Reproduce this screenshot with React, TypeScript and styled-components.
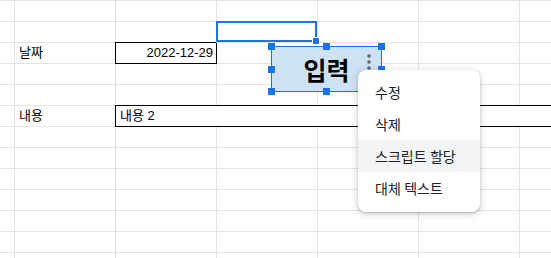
import React from 'react';
import styled, { createGlobalStyle } from 'styled-components';

const GRID = '#e2e2e2';
const BLUE = '#1a73e8';

const Global = createGlobalStyle`
  html, body { margin: 0; padding: 0; background: #fff; overflow: hidden; }
  body { font-family: "Liberation Sans", "Noto Sans CJK KR", Arial, sans-serif; }
`;

const Page = styled.div`
  position: relative;
  width: 551px;
  height: 258px;
  overflow: hidden;
`;

const Grid = styled.div`
  width: 600px;
  box-sizing: border-box;
  border-top: 1px solid ${GRID};
  display: grid;
  grid-template-columns: 15px repeat(5, 101px) 80px;
  grid-auto-rows: 21px;
`;

const Cell = styled.div<{ $align?: 'left' | 'right'; $boxed?: boolean; $wide?: boolean }>`
  position: relative;
  box-sizing: border-box;
  border-right: 1px solid ${(p) => (p.$boxed ? '#000' : GRID)};
  border-bottom: 1px solid ${(p) => (p.$boxed ? '#000' : GRID)};
  ${(p) => (p.$boxed ? 'box-shadow: -1px -1px 0 0 #000, -1px 0 0 0 #000;' : '')}
  grid-column: ${(p) => (p.$wide ? '3 / -1' : 'auto')};
  padding: 0 3px 0 4px;
  font-size: 13px;
  line-height: 20px;
  color: #000;
  text-align: ${(p) => p.$align ?? 'left'};
  white-space: nowrap;
`;

const Selection = styled.div`
  position: absolute;
  top: -1px;
  left: -1px;
  right: 0;
  bottom: 0;
  border: 2px solid ${BLUE};
  pointer-events: none;
  z-index: 2;
`;

const FillHandle = styled.div`
  position: absolute;
  right: -4px;
  bottom: -4px;
  width: 6px;
  height: 6px;
  background: ${BLUE};
  box-shadow: 0 0 0 1px #fff;
`;

const Drawing = styled.div`
  position: absolute;
  left: 271px;
  top: 46px;
  width: 111px;
  height: 46px;
  box-sizing: border-box;
  padding: 7px 10px;
  background: #cfe2f3;
  border: 1px solid ${BLUE};
  display: grid;
  grid-template-columns: 1fr auto 1fr;
  align-items: center;
  font-family: "Noto Sans CJK KR", sans-serif;
  font-weight: 700;
  font-size: 25px;
  color: #000;
  z-index: 3;
`;

const Label = styled.span`
  grid-column: 2;
  line-height: 1;
`;

const Kebab = styled.svg`
  grid-column: 3;
  justify-self: end;
  align-self: start;
  display: block;
`;

const Handle = styled.div<{ $x: 'start' | 'mid' | 'end'; $y: 'start' | 'mid' | 'end' }>`
  position: absolute;
  width: 7px;
  height: 7px;
  background: ${BLUE};
  ${(p) =>
    p.$x === 'start' ? 'left: -4px;' : p.$x === 'end' ? 'right: -4px;' : 'left: calc(50% - 3.5px);'}
  ${(p) =>
    p.$y === 'start' ? 'top: -4px;' : p.$y === 'end' ? 'bottom: -4px;' : 'top: calc(50% - 3.5px);'}
`;

const Menu = styled.div`
  position: absolute;
  left: 358px;
  top: 70px;
  width: 122px;
  box-sizing: border-box;
  padding: 6px 0 8px;
  display: flex;
  flex-direction: column;
  background: #fff;
  border-radius: 8px;
  box-shadow: 0 2px 6px 2px rgba(60, 64, 67, 0.15), 0 1px 2px 0 rgba(60, 64, 67, 0.3);
  z-index: 5;
`;

const MenuItem = styled.div<{ $active?: boolean }>`
  height: 32px;
  display: flex;
  align-items: center;
  padding-left: 17px;
  font-family: Roboto, "Noto Sans CJK KR", sans-serif;
  font-size: 14px;
  color: #202124;
  background: ${(p) => (p.$active ? '#f1f3f4' : 'transparent')};
  white-space: nowrap;
`;

type CellSpec = { text?: string; align?: 'left' | 'right'; boxed?: boolean; wide?: boolean; selected?: boolean };

const ROWS = 13;
const COLS = 7;

function buildRow(r: number): CellSpec[] {
  if (r === 2) {
    return [{}, { text: '날짜' }, { text: '2022-12-29', align: 'right', boxed: true }, {}, {}, {}, {}];
  }
  if (r === 5) {
    return [{}, { text: '내용' }, { text: '내용 2', boxed: true, wide: true }];
  }
  const row: CellSpec[] = Array.from({ length: COLS }, () => ({}));
  if (r === 1) row[3] = { selected: true };
  return row;
}

const handles: Array<['start' | 'mid' | 'end', 'start' | 'mid' | 'end']> = [
  ['start', 'start'],
  ['mid', 'start'],
  ['end', 'start'],
  ['start', 'mid'],
  ['end', 'mid'],
  ['start', 'end'],
  ['mid', 'end'],
  ['end', 'end'],
];

const menuItems = ['수정', '삭제', '스크립트 할당', '대체 텍스트'];

export default function App() {
  return (
    <Page>
      <Global />
      <Grid>
        {Array.from({ length: ROWS }, (_, r) =>
          buildRow(r).map((c, i) => (
            <Cell key={`${r}-${i}`} $align={c.align} $boxed={c.boxed} $wide={c.wide}>
              {c.text}
              {c.selected && (
                <Selection>
                  <FillHandle />
                </Selection>
              )}
            </Cell>
          ))
        )}
      </Grid>
      <Drawing>
        <Label>입력</Label>
        <Kebab width="4" height="16" viewBox="0 0 4 16">
          <circle cx="2" cy="2" r="1.8" fill="#5f6368" />
          <circle cx="2" cy="8" r="1.8" fill="#5f6368" />
          <circle cx="2" cy="14" r="1.8" fill="#5f6368" />
        </Kebab>
        {handles.map(([x, y]) => (
          <Handle key={`${x}-${y}`} $x={x} $y={y} />
        ))}
      </Drawing>
      <Menu>
        {menuItems.map((m) => (
          <MenuItem key={m} $active={m === '스크립트 할당'}>
            {m}
          </MenuItem>
        ))}
      </Menu>
    </Page>
  );
}
